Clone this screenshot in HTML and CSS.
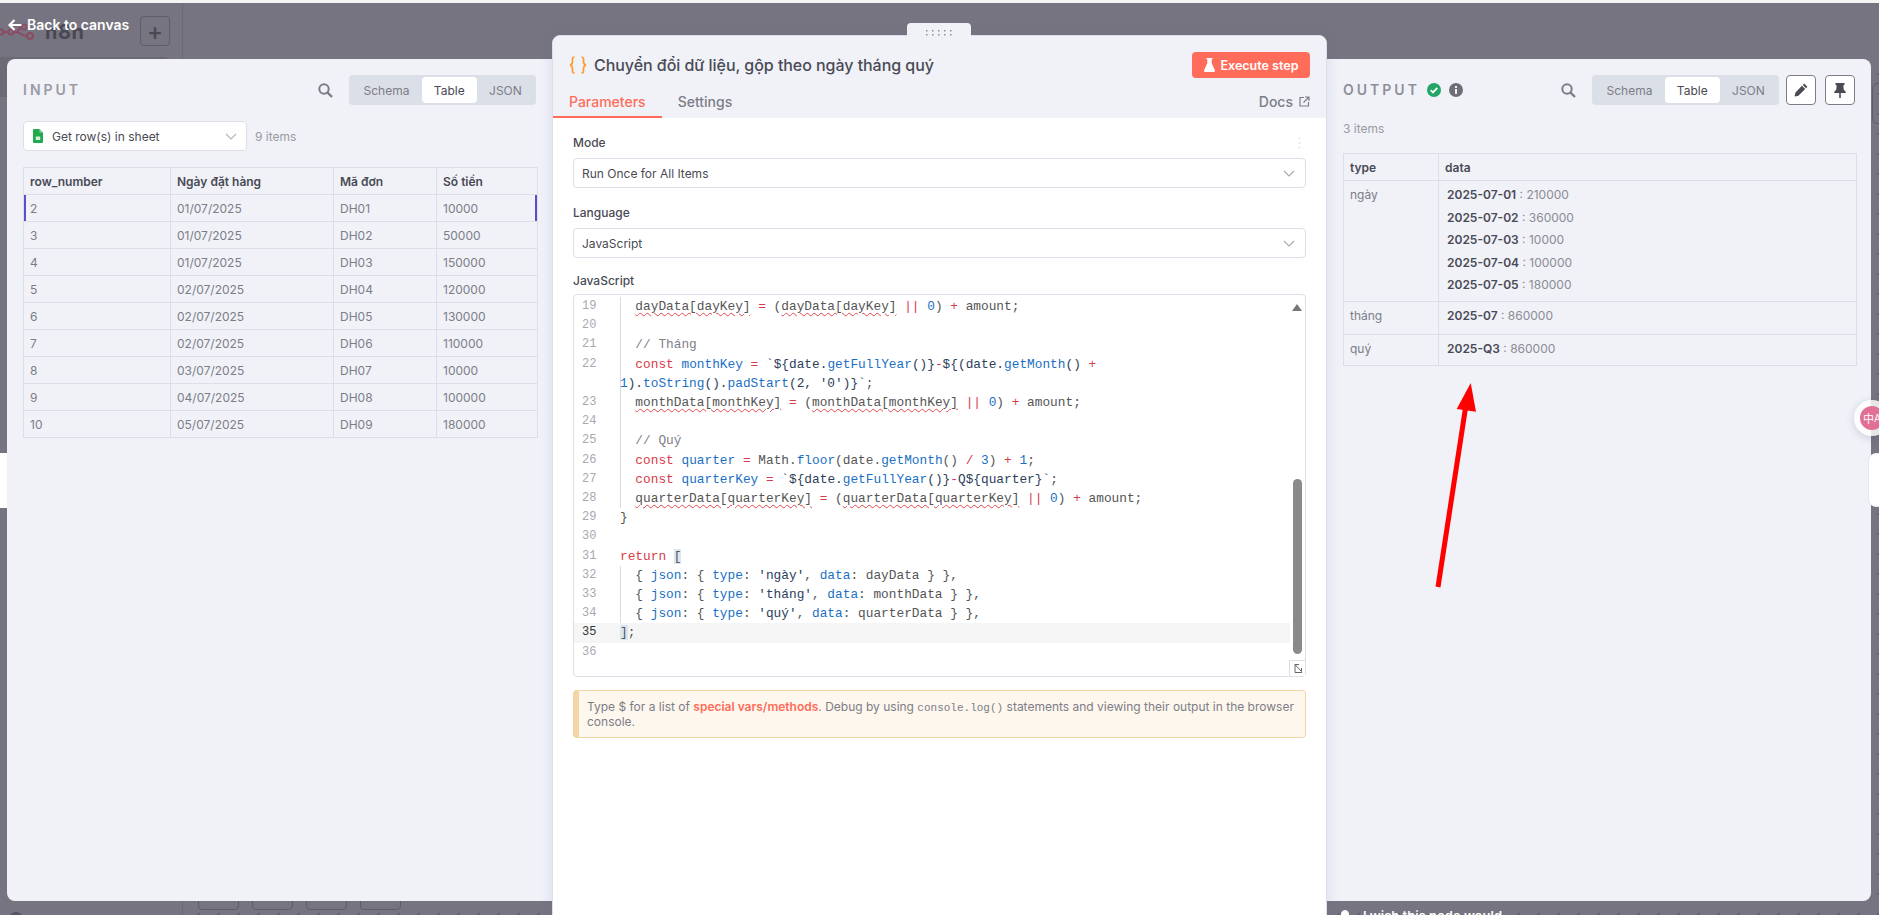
FILE: index.html
```html
<!DOCTYPE html>
<html lang="vi">
<head>
<meta charset="utf-8">
<title>n8n node</title>
<link rel="stylesheet" href="styles.css">
</head>
<body>
<div class="canvas">
  <aside class="sidebar">
    <div class="brand">
      <svg class="brand-logo" width="34" height="20" viewBox="0 0 34 20"><g fill="none" stroke="#8b4c63" stroke-width="2"><circle cx="1" cy="10" r="2.6"/><circle cx="11" cy="10" r="2.6"/><circle cx="24" cy="5" r="2.6"/><circle cx="30" cy="14" r="3"/><path d="M4 10h4M14 10h2c3 0 3-5 5.500-5M16 10c5 0 4 4 11 4"/></g></svg>
      <span class="brand-name">n8n</span>
      <span class="add-btn">+</span>
    </div>
    <div class="side-item"></div>
    <div class="avatar"></div>
  </aside>
  <div class="canvas-main">
    <div class="canvas-top"></div>
    <div class="canvas-foot">
      <span class="tool"></span><span class="tool"></span><span class="tool"></span><span class="tool"></span>
      <span class="wish"><svg width="10" height="14" viewBox="0 0 10 14"><path d="M5 1a4 4 0 0 1 2.500 7.100V10h-5V8.100A4 4 0 0 1 5 1z" fill="#fff"/></svg>I wish this node would</span>
    </div>
  </div>
  <div class="band-left"></div>
  <div class="chip-right"></div>
</div>

<div class="ndv">
  <div class="ndv-top">
    <a class="back"><svg width="14" height="12" viewBox="0 0 14 12"><path d="M6.500 1 1.500 6l5 5M2 6h11.500" fill="none" stroke="#fff" stroke-width="2.200"/></svg>Back to canvas</a>
  </div>
  <div class="ndv-row">
    <section class="panel panel-input">
      <header class="panel-head">
        <h2 class="panel-title">INPUT</h2>
        <span class="grow"></span>
        <svg class="search" width="15" height="15" viewBox="0 0 15 15"><circle cx="6" cy="6" r="4.700" fill="none" stroke="#7d7d87" stroke-width="2"/><path d="M9.500 9.500 14 14" stroke="#7d7d87" stroke-width="2.400"/></svg>
        <div class="toggle"><span class="toggle-item">Schema</span><span class="toggle-item on">Table</span><span class="toggle-item">JSON</span></div>
      </header>
      <div class="source-row">
        <div class="source-select">
          <svg width="10" height="14" viewBox="0 0 10 14"><path d="M1 0h5.500L10 3.500V13a1 1 0 0 1-1 1H1a1 1 0 0 1-1-1V1a1 1 0 0 1 1-1z" fill="#20a94d"/><path d="M6.500 0 10 3.500H6.500z" fill="#8fd4a6"/><rect x="2.800" y="7.500" width="4.400" height="3.500" fill="#d4f0dc"/></svg>
          <span class="source-name">Get row(s) in sheet</span>
          <svg class="chev" width="12" height="7" viewBox="0 0 12 7"><path d="M1 1l5 5 5-5" fill="none" stroke="#b4b4bc" stroke-width="1.100"/></svg>
        </div>
        <span class="count">9 items</span>
      </div>
      <table class="grid grid-input">
        <colgroup><col class="ci1"><col class="ci2"><col class="ci3"><col class="ci4"></colgroup>
        <thead><tr><th>row_number</th><th>Ngày đặt hàng</th><th>Mã đơn</th><th>Số tiền</th></tr></thead>
        <tbody>
          <tr class="hit"><td>2</td><td>01/07/2025</td><td>DH01</td><td>10000</td></tr>
          <tr><td>3</td><td>01/07/2025</td><td>DH02</td><td>50000</td></tr>
          <tr><td>4</td><td>01/07/2025</td><td>DH03</td><td>150000</td></tr>
          <tr><td>5</td><td>02/07/2025</td><td>DH04</td><td>120000</td></tr>
          <tr><td>6</td><td>02/07/2025</td><td>DH05</td><td>130000</td></tr>
          <tr><td>7</td><td>02/07/2025</td><td>DH06</td><td>110000</td></tr>
          <tr><td>8</td><td>03/07/2025</td><td>DH07</td><td>10000</td></tr>
          <tr><td>9</td><td>04/07/2025</td><td>DH08</td><td>100000</td></tr>
          <tr><td>10</td><td>05/07/2025</td><td>DH09</td><td>180000</td></tr>
        </tbody>
      </table>
    </section>

    <section class="main-panel">
      <div class="handle"><svg width="26" height="6" viewBox="0 0 26 6"><g fill="#8d8d96"><rect y="0" width="1.500" height="1.500"/><rect x="6" width="1.500" height="1.500"/><rect x="12" width="1.500" height="1.500"/><rect x="18" width="1.500" height="1.500"/><rect x="24" width="1.500" height="1.500"/><rect y="4" width="1.500" height="1.500"/><rect x="6" y="4" width="1.500" height="1.500"/><rect x="12" y="4" width="1.500" height="1.500"/><rect x="18" y="4" width="1.500" height="1.500"/><rect x="24" y="4" width="1.500" height="1.500"/></g></svg></div>
      <header class="main-head">
        <svg class="braces" width="18" height="18" viewBox="0 0 18 18"><path d="M5.500 1C3 1 3.500 3 3.500 5.500 3.500 7.500 3.200 8.500 1 9c2.200.5 2.500 1.500 2.500 3.500C3.500 15 3 17 5.500 17M12.500 1c2.500 0 2 2 2 4.500 0 2 .3 3 2.500 3.500-2.200.5-2.500 1.500-2.500 3.500 0 2.500.5 4.500-2 4.500" fill="none" stroke="#ff9b26" stroke-width="1.700"/></svg>
        <h1 class="node-title">Chuyển đổi dữ liệu, gộp theo ngày tháng quý</h1>
        <span class="grow"></span>
        <button class="exec"><svg width="11" height="14" viewBox="0 0 11 14"><path d="M2.500 0h6v1.300h-.8v3.900l3.100 6.700a1.300 1.300 0 0 1-1.200 2H1.400a1.300 1.300 0 0 1-1.200-2l3.100-6.700V1.300h-.8z" fill="#fff"/></svg>Execute step</button>
      </header>
      <nav class="tabs">
        <span class="tab active">Parameters</span>
        <span class="tab">Settings</span>
        <span class="grow"></span>
        <span class="docs">Docs<svg width="11" height="11" viewBox="0 0 11 11"><path d="M5 1.500H1V10h8.500V6M6 1h4v4M10 1 4.500 6.500" fill="none" stroke="#7d7d87" stroke-width="1.200"/></svg></span>
      </nav>
      <div class="params">
        <div class="label-row"><label class="field-label">Mode</label><svg width="3" height="12" viewBox="0 0 3 12"><g fill="#e3e5ec"><circle cx="1.500" cy="1.500" r="1.100"/><circle cx="1.500" cy="6" r="1.100"/><circle cx="1.500" cy="10.500" r="1.100"/></g></svg></div>
        <div class="select">Run Once for All Items<svg width="12" height="7" viewBox="0 0 12 7"><path d="M1 1l5 5 5-5" fill="none" stroke="#a8a8b0" stroke-width="1.100"/></svg></div>
        <div class="label-row"><label class="field-label">Language</label></div>
        <div class="select">JavaScript<svg width="12" height="7" viewBox="0 0 12 7"><path d="M1 1l5 5 5-5" fill="none" stroke="#a8a8b0" stroke-width="1.100"/></svg></div>
        <div class="label-row label-js"><label class="field-label">JavaScript</label></div>
        <div class="editor">
          <div class="ln"><span class="no">19</span><code class="ind">  <span class="err">dayData[dayKey]</span> <b>=</b> (<span class="err">dayData[dayKey]</span> <b>||</b> <i>0</i>) <b>+</b> amount;</code></div>
          <div class="ln"><span class="no">20</span><code class="ind"> </code></div>
          <div class="ln"><span class="no">21</span><code class="ind">  <em>// Tháng</em></code></div>
          <div class="ln"><span class="no">22</span><code class="ind">  <b>const</b> <i>monthKey</i> <b>=</b> <u>`${date.</u><i>getFullYear</i><u>()}</u><b>-</b><u>${(date.</u><i>getMonth</i><u>()</u> <b>+</b>
<i>1</i><u>).</u><i>toString</i><u>().</u><i>padStart</i><u>(2, '0')}`</u>;</code></div>
          <div class="ln"><span class="no">23</span><code class="ind">  <span class="err">monthData[monthKey]</span> <b>=</b> (<span class="err">monthData[monthKey]</span> <b>||</b> <i>0</i>) <b>+</b> amount;</code></div>
          <div class="ln"><span class="no">24</span><code class="ind"> </code></div>
          <div class="ln"><span class="no">25</span><code class="ind">  <em>// Quý</em></code></div>
          <div class="ln"><span class="no">26</span><code class="ind">  <b>const</b> <i>quarter</i> <b>=</b> Math.<i>floor</i>(date.<i>getMonth</i>() <b>/</b> <i>3</i>) <b>+</b> <i>1</i>;</code></div>
          <div class="ln"><span class="no">27</span><code class="ind">  <b>const</b> <i>quarterKey</i> <b>=</b> <u>`${date.</u><i>getFullYear</i><u>()}</u><b>-</b><u>Q${quarter}`</u>;</code></div>
          <div class="ln"><span class="no">28</span><code class="ind">  <span class="err">quarterData[quarterKey]</span> <b>=</b> (<span class="err">quarterData[quarterKey]</span> <b>||</b> <i>0</i>) <b>+</b> amount;</code></div>
          <div class="ln"><span class="no">29</span><code>}</code></div>
          <div class="ln"><span class="no">30</span><code> </code></div>
          <div class="ln"><span class="no">31</span><code><b>return</b> <span class="match">[</span></code></div>
          <div class="ln"><span class="no">32</span><code class="ind">  { <i>json</i>: { <i>type</i>: <u>'ngày'</u>, <i>data</i>: dayData } },</code></div>
          <div class="ln"><span class="no">33</span><code class="ind">  { <i>json</i>: { <i>type</i>: <u>'tháng'</u>, <i>data</i>: monthData } },</code></div>
          <div class="ln"><span class="no">34</span><code class="ind">  { <i>json</i>: { <i>type</i>: <u>'quý'</u>, <i>data</i>: quarterData } },</code></div>
          <div class="ln current"><span class="no">35</span><code><span class="match">]</span>;</code></div>
          <div class="ln"><span class="no">36</span><code> </code></div>
          <span class="sb-arrow"></span>
          <span class="sb-thumb"></span>
          <span class="resizer"><svg width="10" height="11" viewBox="0 0 10 11"><path d="M2 1.500h4M2 1.500V9.500h7M2 1.500l6.500 7M8.500 8.500V5" fill="none" stroke="#666" stroke-width="1"/></svg></span>
        </div>
        <div class="hint">Type $ for a list of <strong>special vars/methods</strong>. Debug by using <code class="inline">console.log()</code> statements and viewing their output in the browser console.</div>
      </div>
    </section>

    <section class="panel panel-output">
      <header class="panel-head">
        <h2 class="panel-title">OUTPUT</h2>
        <svg class="status" width="14" height="14" viewBox="0 0 14 14"><circle cx="7" cy="7" r="7" fill="#22a565"/><path d="M3.700 7.200 6 9.400l4.300-4.500" fill="none" stroke="#fff" stroke-width="1.800"/></svg>
        <svg class="status" width="14" height="14" viewBox="0 0 14 14"><circle cx="7" cy="7" r="7" fill="#6f6f78"/><rect x="6" y="6" width="2" height="5" fill="#f0f2f8"/><rect x="6" y="3" width="2" height="2" fill="#f0f2f8"/></svg>
        <span class="grow"></span>
        <svg class="search" width="15" height="15" viewBox="0 0 15 15"><circle cx="6" cy="6" r="4.700" fill="none" stroke="#7d7d87" stroke-width="2"/><path d="M9.500 9.500 14 14" stroke="#7d7d87" stroke-width="2.400"/></svg>
        <div class="toggle"><span class="toggle-item">Schema</span><span class="toggle-item on">Table</span><span class="toggle-item">JSON</span></div>
        <button class="icon-btn btn-edit"><svg width="14" height="14" viewBox="0 0 14 14"><path d="M10.200.6 13.400 3.800 12 5.200 8.800 2zM8 2.800 11.200 6 4.400 12.800 1 13.600 0.600 13l.9-3.400z" fill="#4a4a55"/></svg></button>
        <button class="icon-btn btn-pin"><svg width="12" height="15" viewBox="0 0 12 15"><path d="M1.500 0h9v1.700L9.300 2.600l.5 4.300c1.400.7 2 1.800 2 3H6.800V15h-1.600V9.900H.2c0-1.200.6-2.300 2-3l.5-4.300L1.500 1.700z" fill="#4a4a55"/></svg></button>
      </header>
      <div class="out-count">3 items</div>
      <table class="grid grid-output">
        <colgroup><col class="co1"><col class="co2"></colgroup>
        <thead><tr><th>type</th><th>data</th></tr></thead>
        <tbody>
          <tr class="r-day"><td>ngày</td><td>
            <div class="kv"><strong>2025-07-01</strong> : 210000</div>
            <div class="kv"><strong>2025-07-02</strong> : 360000</div>
            <div class="kv"><strong>2025-07-03</strong> : 10000</div>
            <div class="kv"><strong>2025-07-04</strong> : 100000</div>
            <div class="kv"><strong>2025-07-05</strong> : 180000</div>
          </td></tr>
          <tr class="r-month"><td>tháng</td><td><div class="kv"><strong>2025-07</strong> : 860000</div></td></tr>
          <tr class="r-one"><td>quý</td><td><div class="kv"><strong>2025-Q3</strong> : 860000</div></td></tr>
        </tbody>
      </table>
    </section>
  </div>
</div>

<div class="band-right"></div>
<svg class="red-arrow" width="50" height="212" viewBox="0 0 50 212"><path d="M8 207 35.500 28" stroke="#ff0000" stroke-width="5" fill="none"/><path d="M40.700 3 26.700 29 46 31.700z" fill="#ff0000"/></svg>
<div class="translate"><span class="tr-inner"><span class="tr-zh">中</span><span class="tr-a">A</span></span></div>
</body>
</html>
```
FILE: styles.css
```css
* { box-sizing: border-box; }
html, body { margin: 0; padding: 0; height: 915px; overflow: hidden; }
body {
  position: relative;
  width: 1879px;
  font-family: Inter, "Noto Sans", sans-serif;
  background-color: #767480;
  background-image: radial-gradient(circle at 18.5px 14px, #63616c 1px, transparent 1.3px);
  background-size: 20px 20px;
  border-top: 3px solid #f4f4f5;
}
.grow { flex: 1; }

/* dimmed canvas behind the node view */
.canvas { position: absolute; inset: 0; display: flex; }
.sidebar {
  width: 183px;
  flex: none;
  background: #767480;
  border-right: 1px solid #6b6974;
  display: flex;
  flex-direction: column;
  position: relative;
}
.brand { display: flex; align-items: center; height: 54px; padding-top: 2px; }
.brand-logo { margin-top: 2px; flex: none; }
.brand-name { font-size: 20px; font-weight: 700; color: #4a4852; margin-left: 11px; margin-top: 2px; letter-spacing: .5px; width: 95px; flex: none; }
.add-btn {
  width: 30px; height: 30px; border: 1px solid #5f5d68; border-radius: 4px; flex: none;
  display: flex; align-items: center; justify-content: center;
  color: #4a4852; font-size: 24px; font-weight: 500;
}
.side-item { background: #6b6974; height: 40px; width: 170px; border-radius: 0 6px 6px 0; }
.avatar { width: 14px; height: 14px; border-radius: 50%; background: #5a4f68; margin: auto 0 -11px 9px; }
.canvas-main { flex: 1; display: flex; flex-direction: column; justify-content: space-between; }
.canvas-top { height: 60px; background: #767480; }
.canvas-foot { display: flex; align-items: flex-start; gap: 13px; padding-left: 15px; height: 32px; }
.tool { width: 41px; height: 27px; border: 1px solid #5f5d68; border-radius: 4px; flex: none; }
.wish { display: flex; align-items: center; gap: 13px; margin: 25px 0 0 926px; font-size: 13px; font-weight: 600; color: #fff; white-space: nowrap; }
.band-left { position: absolute; left: -10px; top: 450px; width: 30px; height: 55px; background: #fff; border-radius: 8px; }
.chip-right { position: absolute; left: 1872px; top: 80px; width: 20px; height: 41px; border: 1px solid #5f5d68; border-radius: 5px; }

/* node detail view */
.ndv { position: absolute; inset: 0; }
.ndv-top { height: 56px; padding: 12px 0 0 8px; }
.back { display: inline-flex; align-items: center; gap: 5px; font-size: 14px; font-weight: 600; color: #fff; line-height: 18px; position: relative; z-index: 2; }
.ndv-row { display: flex; align-items: flex-start; padding-left: 7px; }

.panel {
  height: 842px;
  background: #f0f2f8;
  padding: 16px 16px 0;
}
.panel-input { width: 546px; border-radius: 8px 0 0 8px; }
.panel-output { width: 545px; border-radius: 0 8px 8px 0; margin-left: -1px; padding: 16px 16px 0 17px; }
.panel-head { display: flex; align-items: center; height: 30px; }
.panel-title { margin: 0; font-size: 14px; font-weight: 600; letter-spacing: 3px; color: #8f8f98; line-height: 30px; }
.panel-input .panel-title { color: #9a9aa3; }
.search { margin-right: 16px; flex: none; }
.status { margin-left: 8px; flex: none; }
.status:first-of-type { margin-left: 7px; }
.toggle { display: flex; height: 30px; padding: 2px; background: #dbdfe8; border-radius: 4px; font-size: 12px; color: #7d7d87; }
.panel-input .toggle { margin-right: 1px; }
.toggle-item { display: flex; align-items: center; padding: 0 12.200px; border-radius: 4px; }
.toggle-item.on { background: #fff; color: #4a4a55; }
.icon-btn {
  width: 30px; height: 30px; padding: 0;
  background: #fff; border: 1px solid #7d7d87; border-radius: 4px;
  display: flex; align-items: center; justify-content: center;
}
.btn-edit { margin-left: 7px; }
.btn-pin { margin-left: 9px; }
.source-row { display: flex; align-items: center; gap: 8px; margin-top: 16px; }
.source-select {
  width: 224px; height: 30px; background: #fff; border: 1px solid #dbdfe8; border-radius: 4px;
  display: flex; align-items: center; padding: 0 9px; font-size: 12px; color: #4a4a55;
}
.source-name { margin-left: 9px; flex: 1; }
.count { font-size: 12px; color: #9a9aa3; }
.out-count { font-size: 12px; color: #9a9aa3; margin-top: 15px; line-height: 17px; }

.grid { border-collapse: collapse; table-layout: fixed; font-size: 12px; color: #7d7d87; margin-top: 16px; background: #f0f2f8; }
.grid th, .grid td { border: 1px solid #dbdfe8; text-align: left; padding: 0 6px; font-weight: 400; }
.grid th { font-weight: 600; color: #4a4a55; height: 27px; }
.grid-input { width: 514px; }
.grid-input td { height: 27px; }
.ci1 { width: 147px; } .ci2 { width: 163px; } .ci3 { width: 103px; } .ci4 { width: 101px; }
.hit td:first-child { box-shadow: inset 2px 0 0 #5b4fc9; }
.hit td:last-child { box-shadow: inset -2px 0 0 #5b4fc9; }
.grid-output { width: 513px; margin-top: 16px; }
.co1 { width: 95px; } .co2 { width: 418px; }
.grid-output td { vertical-align: top; padding: 6px 6px 0; }
.grid-output td + td { padding: 3px 8px 0; }
.r-day { height: 121px; }
.r-month { height: 33px; }
.r-one { height: 31px; }
.kv { line-height: 22.500px; color: #8b8b94; }
.kv strong { font-weight: 600; color: #4a4a55; }

/* centre panel */
.main-panel {
  width: 775px;
  height: 900px;
  margin: -24px 0 0 -1px;
  position: relative;
  z-index: 1;
  background: #fff;
  border: 1px solid #dbdfe8;
  border-radius: 8px 8px 0 0;
  box-shadow: 0 0 14px rgba(90, 100, 170, .14);
}
.handle {
  position: absolute; left: 354px; top: -13px; width: 64px; height: 13px;
  background: #f0f2f8; border-radius: 4px 4px 0 0;
  display: flex; align-items: flex-end; justify-content: center; padding-bottom: 0;
}
.main-head {
  display: flex; align-items: center; height: 59px; padding: 0 16px 1px;
  background: #f0f2f8; border-radius: 8px 8px 0 0;
}
.braces { flex: none; }
.node-title { margin: 0 0 0 7px; font-size: 16px; font-weight: 500; letter-spacing: -.05px; color: #4a4a55; }
.exec {
  display: flex; align-items: center; justify-content: center; gap: 6px;
  width: 118px; height: 26px; background: #ff6d5a; border: 0; border-radius: 4px;
  color: #fff; font: 600 12.500px Inter, sans-serif; padding: 0;
}
.tabs { display: flex; align-items: flex-end; height: 23px; background: #f0f2f8; padding-right: 16px; font-size: 14px; font-weight: 500; color: #7d7d87; }
.tab { padding: 0 16px; height: 23px; line-height: 13px; }
.tab.active { color: #ff6d5a; border-bottom: 2px solid #ff6d5a; }
.docs { display: flex; align-items: center; gap: 6px; height: 23px; padding-bottom: 10px; }

.params { padding: 17px 20px 0; background: #fff; }
.label-row { display: flex; align-items: center; justify-content: space-between; height: 16px; margin-bottom: 7px; padding-right: 5px; }
.field-label { font-size: 12px; font-weight: 500; color: #4a4a55; line-height: 16px; }
.select {
  display: flex; align-items: center; justify-content: space-between;
  height: 30px; margin-bottom: 17px; padding: 0 10px 0 8px;
  background: #fff; border: 1px solid #dbdfe8; border-radius: 4px;
  font-size: 12px; color: #4a4a55;
}
.label-js { margin-top: -2px; margin-bottom: 5px; }

.editor {
  position: relative;
  height: 383px;
  padding-top: 2px;
  border: 1px solid #dbdfe8;
  border-radius: 4px;
  font: 12.800px/19.200px "Liberation Mono", monospace;
  color: #555;
}
.ln { display: flex; }
.no { width: 46px; flex: none; padding-left: 8px; color: #a8a8b0; font-size: 12px; }
.ln code { display: block; flex: 1; font: inherit; white-space: pre; }
.ln .ind { box-shadow: inset 1px 0 0 #dcdcdc; }
.current { background: #f5f5f5; width: 716px; }
.current .no { color: #333; }
.ln b { font-weight: 400; color: #d73a49; }
.ln i { font-style: normal; color: #1a6fc4; }
.ln u { text-decoration: none; color: #2c3e5a; }
.ln em { font-style: normal; color: #808088; }
.ln .err { text-decoration: underline wavy #e5484d 1px; text-underline-offset: 2px; }
.match { background: #dbe6f3; }
.sb-arrow { position: absolute; right: 3px; top: 9px; border: 5px solid transparent; border-top: 0; border-bottom: 7px solid #777; }
.sb-thumb { position: absolute; right: 3px; top: 184px; width: 9px; height: 175px; background: #8a8a8a; border-radius: 5px; }
.resizer {
  position: absolute; right: 0; bottom: 0; width: 16px; height: 16px;
  background: #fff; border: 1px solid #dbdfe8; border-width: 1px 0 0 1px;
  display: flex; align-items: center; justify-content: center;
}
.hint {
  margin-top: 13px; padding: 8px 8px; height: 48px;
  background: #fdf7ee; border: 1px solid #f3d6a5; border-left-width: 6px; border-radius: 4px;
  font-size: 12px; line-height: 15px; color: #7d7d87;
}
.hint strong { color: #ff6d5a; font-weight: 600; }
.hint .inline { font: 11px "Liberation Mono", monospace; }

/* overlays */
.band-right { position: absolute; left: 1868px; top: 450px; width: 30px; height: 54px; background: #fff; border: 1px solid #e4e6ef; border-radius: 8px; }
.red-arrow { position: absolute; left: 1430px; top: 377px; }
.translate {
  position: absolute; left: 1854px; top: 397px; width: 36px; height: 36px;
  border-radius: 50%; background: rgba(255,255,255,.82);
  display: flex; align-items: center; justify-content: center;
  box-shadow: 0 2px 8px rgba(60,60,90,.2);
}
.tr-inner {
  width: 24px; height: 24px; border-radius: 50%; background: #e26f94;
  color: #fff; display: flex; align-items: center; justify-content: center;
  font-size: 9px; line-height: 1;
}
.tr-zh { font-family: "Noto Sans CJK SC", sans-serif; font-size: 11px; }
.tr-a { font-size: 10px; }
```
